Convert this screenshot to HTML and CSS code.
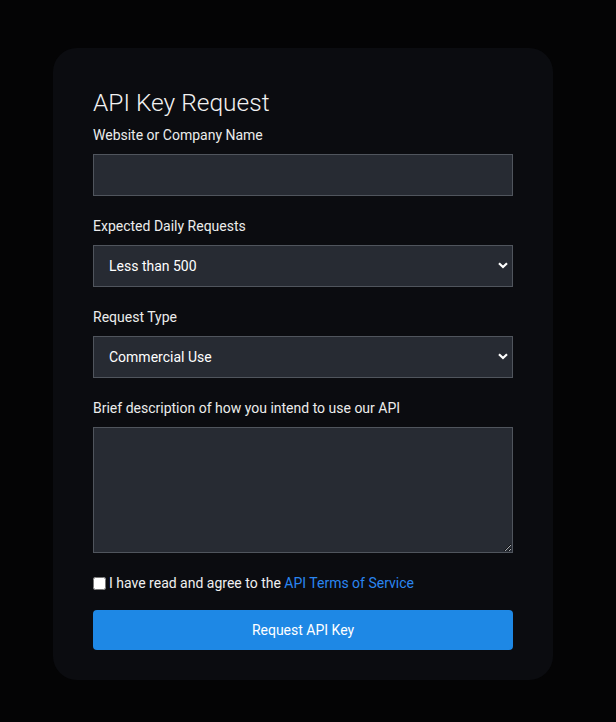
FILE: index.html
```html
<!DOCTYPE html>
<html lang="en">
<head>
<meta charset="utf-8">
<title>API Key Request</title>
<link rel="stylesheet" href="styles.css">
</head>
<body>
<main class="page">
  <form class="card">
    <h1 class="title">API Key Request</h1>
    <div class="field">
      <label class="label" for="company">Website or Company Name</label>
      <input class="control" id="company" type="text">
    </div>
    <div class="field">
      <label class="label" for="daily">Expected Daily Requests</label>
      <div class="select-wrap">
        <select class="control select" id="daily">
          <option>Less than 500</option>
          <option>500 - 5,000</option>
          <option>More than 5,000</option>
        </select>
        <svg class="chev" width="10" height="7" viewBox="0 0 10 7"><path d="M1 1.2 L5 5 L9 1.2" fill="none" stroke="#fff" stroke-width="2.2"/></svg>
      </div>
    </div>
    <div class="field">
      <label class="label" for="type">Request Type</label>
      <div class="select-wrap">
        <select class="control select" id="type">
          <option>Commercial Use</option>
          <option>Personal Use</option>
        </select>
        <svg class="chev" width="10" height="7" viewBox="0 0 10 7"><path d="M1 1.2 L5 5 L9 1.2" fill="none" stroke="#fff" stroke-width="2.2"/></svg>
      </div>
    </div>
    <div class="field">
      <label class="label" for="desc">Brief description of how you intend to use our API</label>
      <textarea class="control area" id="desc"></textarea>
    </div>
    <div class="agree">
      <input class="check" type="checkbox" id="agree">
      <label for="agree">I have read and agree to the <a class="link" href="#">API Terms of Service</a></label>
    </div>
    <button class="submit" type="button">Request API Key</button>
  </form>
</main>
</body>
</html>
```
FILE: styles.css
```css
* { box-sizing: border-box; }
html, body { margin: 0; padding: 0; }
body {
  background: #040405;
  font-family: Roboto, "Liberation Sans", sans-serif;
  color: #e6e6e6;
  min-height: 722px;
}
.page {
  display: flex;
  justify-content: center;
  padding: 48px 10px 0 0;
}
.card {
  width: 500px;
  height: 632px;
  background: #0b0c10;
  border-radius: 24px;
  padding: 40px 40px 30px;
  display: flex;
  flex-direction: column;
}
.title {
  margin: 0 0 8px;
  font-size: 24.5px;
  font-weight: 300;
  line-height: 29px;
  color: #f2f2f2;
}
.field {
  display: flex;
  flex-direction: column;
  margin-bottom: 20px;
}
.label {
  font-size: 14px;
  font-weight: 400;
  line-height: 21px;
  margin-bottom: 8px;
  color: #ececec;
}
.control {
  width: 420px;
  height: 42px;
  background: #272b33;
  border: 1px solid #50555d;
  border-radius: 0;
  color: #ffffff;
  font-family: Roboto, "Liberation Sans", sans-serif;
  font-size: 14px;
  margin: 0;
  outline: none;
}
.select-wrap {
  position: relative;
  width: 420px;
  height: 42px;
}
.select {
  appearance: none;
  -webkit-appearance: none;
  padding: 0 30px 0 15px;
  display: block;
}
.chev {
  position: absolute;
  left: 405px;
  top: 17px;
  pointer-events: none;
}
.area {
  height: 126px;
  resize: vertical;
  padding: 8px 12px;
}
.agree {
  display: flex;
  align-items: center;
  font-size: 14px;
  line-height: 21px;
  color: #f0f0f0;
  margin-bottom: 16px;
}
.check {
  width: 13px;
  height: 13px;
  margin: 0 3px 0 0;
}
.link {
  color: #2a86f0;
  text-decoration: none;
}
.submit {
  width: 420px;
  height: 40px;
  border: 0;
  border-radius: 4px;
  background: #1e88e5;
  color: #ffffff;
  font-family: Roboto, "Liberation Sans", sans-serif;
  font-size: 14px;
  font-weight: 400;
}
```
